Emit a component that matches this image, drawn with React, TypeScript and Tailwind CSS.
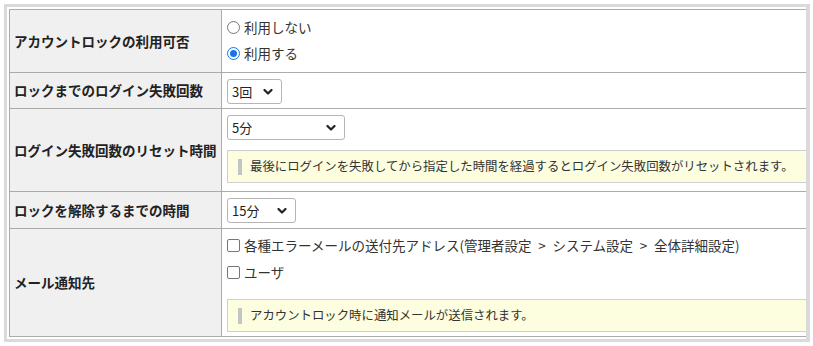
import React from 'react';

const font = { fontFamily: '"Noto Sans CJK JP", "Noto Sans", sans-serif' };

function Chevron() {
  return (
    <svg width="10" height="7" viewBox="0 0 10 7" className="pointer-events-none absolute right-[8px] top-1/2 -translate-y-1/2">
      <path d="M1.5 1.5 L5 5 L8.5 1.5" fill="none" stroke="#222" strokeWidth="2.2" strokeLinecap="round" strokeLinejoin="round" />
    </svg>
  );
}

function Select({ value, width }: { value: string; width: string }) {
  return (
    <div className={`relative h-[25px] ${width} rounded-[3px] border border-[#b5b5b5] bg-white`}>
      <span className="absolute left-[4px] top-1/2 -translate-y-1/2 text-[13px] text-[#222]">{value}</span>
      <Chevron />
    </div>
  );
}

function Note({ text }: { text: string }) {
  return (
    <div className="flex h-[33px] items-center border border-r-0 border-[#cfcfcf] bg-[#fdfddf] pl-[10px]">
      <span className="mr-[8px] h-[16px] w-[4px] bg-[#c4c4c4]" />
      <span className="text-[12.4px] text-[#333]">{text}</span>
    </div>
  );
}

function Radio({ checked, label }: { checked?: boolean; label: string }) {
  return (
    <div className="flex h-[26px] items-center gap-[4px]">
      {checked ? (
        <span className="flex h-[13px] w-[13px] items-center justify-center rounded-full border-[1.5px] border-[#1a73e8] bg-white">
          <span className="h-[7px] w-[7px] rounded-full bg-[#1a73e8]" />
        </span>
      ) : (
        <span className="h-[13px] w-[13px] rounded-full border border-[#767676] bg-white" />
      )}
      <span className="text-[13.5px] text-[#333]">{label}</span>
    </div>
  );
}

function Check({ label }: { label: string }) {
  return (
    <div className="flex h-[27px] items-center gap-[4px]">
      <span className="h-[13px] w-[13px] rounded-[2px] border border-[#767676] bg-white" />
      <span className="text-[13.5px] text-[#333]">{label}</span>
    </div>
  );
}

const th = 'w-[212px] border border-[#ababab] bg-[#f0f0f0] pl-[4px] text-left align-middle text-[13.5px] font-bold text-[#222]';
const td = 'border border-[#ababab] bg-white pl-[5px] align-top';

export default function App() {
  return (
    <div className="h-[346px] w-[813px] bg-white p-[4px]" style={font}>
      <div className="h-[338px] w-[806px] overflow-hidden border-[3px] border-r-[4px] border-[#dadada] bg-white p-[2px]">
        <table className="w-[900px] border-collapse">
          <tbody>
            <tr>
              <th className={th}>アカウントロックの利用可否</th>
              <td className={`${td} pt-[4px] pb-[6px]`}>
                <Radio label="利用しない" />
                <Radio checked label="利用する" />
              </td>
            </tr>
            <tr>
              <th className={th}>ロックまでのログイン失敗回数</th>
              <td className={`${td} pt-[6px] pb-[4px]`}>
                <Select value="3回" width="w-[55px]" />
              </td>
            </tr>
            <tr>
              <th className={th}>ログイン失敗回数のリセット時間</th>
              <td className={`${td} pt-[6px] pb-[8px]`}>
                <Select value="5分" width="w-[118px]" />
                <div className="mt-[10px]">
                  <Note text="最後にログインを失敗してから指定した時間を経過するとログイン失敗回数がリセットされます。" />
                </div>
              </td>
            </tr>
            <tr>
              <th className={th}>ロックを解除するまでの時間</th>
              <td className={`${td} pt-[6px] pb-[5px]`}>
                <Select value="15分" width="w-[69px]" />
              </td>
            </tr>
            <tr>
              <th className={th}>メール通知先</th>
              <td className={`${td} pt-[3px] pb-[4px]`}>
                <Check label={'各種エラーメールの送付先アドレス(管理者設定\u2002>\u2002システム設定\u2002>\u2002全体詳細設定)'} />
                <Check label="ユーザ" />
                <div className="mt-[13px]">
                  <Note text="アカウントロック時に通知メールが送信されます。" />
                </div>
              </td>
            </tr>
          </tbody>
        </table>
      </div>
    </div>
  );
}
